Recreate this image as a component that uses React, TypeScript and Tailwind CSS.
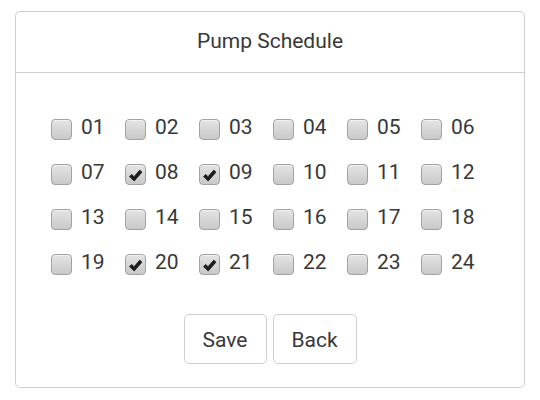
import React, { useState } from "react";

const hours = Array.from({ length: 24 }, (_, i) => String(i + 1).padStart(2, "0"));
const initial = ["08", "09", "20", "21"];

function Box({ checked }: { checked: boolean }) {
  return (
    <span className="flex h-[21px] w-[21px] shrink-0 items-end justify-center rounded-[4px] border border-[#a2a2a2] bg-gradient-to-b from-[#e4e4e4] to-[#c9c9c9] pb-[2px] shadow-[inset_0_1px_0_#f2f2f2]">
      {checked && (
        <svg viewBox="0 0 16 14" className="h-[13px] w-[15px]">
          <path
            d="M1.5 8.2 L4 5.8 L6.4 8.3 L12.6 1.2 L15 3.4 L6.6 13 Z"
            fill="#1c1c1c"
            strokeLinejoin="round"
            stroke="#1c1c1c"
            strokeWidth="0.8"
          />
        </svg>
      )}
    </span>
  );
}

export default function App() {
  const [sel, setSel] = useState<string[]>(initial);
  const toggle = (h: string) =>
    setSel((s) => (s.includes(h) ? s.filter((x) => x !== h) : [...s, h]));

  return (
    <div className="h-[400px] w-[540px] bg-white pl-[15px] pt-[11px] font-['Roboto',sans-serif] text-[#383838]">
      <div className="flex h-[377px] w-[510px] flex-col rounded-[5px] border border-[#cfcfcf]">
        <div className="flex h-[61px] items-center justify-center border-b border-[#cfcfcf] text-[21px]">
          Pump Schedule
        </div>
        <div className="grid grid-cols-[repeat(6,74px)] pl-[35px] pt-[34px]">
          {hours.map((h) => (
            <label
              key={h}
              onClick={() => toggle(h)}
              className="flex h-[45px] cursor-pointer items-center gap-[9px] text-[21px]"
            >
              <Box checked={sel.includes(h)} />
              <span className="pb-[5px] leading-none">{h}</span>
            </label>
          ))}
        </div>
        <div className="mt-[27px] flex justify-center gap-[6px]">
          <button className="h-[50px] w-[83px] rounded-[5px] border border-[#cfcfcf] bg-white pt-[3px] text-[21px] text-[#383838]">
            Save
          </button>
          <button className="h-[50px] w-[84px] rounded-[5px] border border-[#cfcfcf] bg-white pt-[3px] text-[21px] text-[#383838]">
            Back
          </button>
        </div>
      </div>
    </div>
  );
}
